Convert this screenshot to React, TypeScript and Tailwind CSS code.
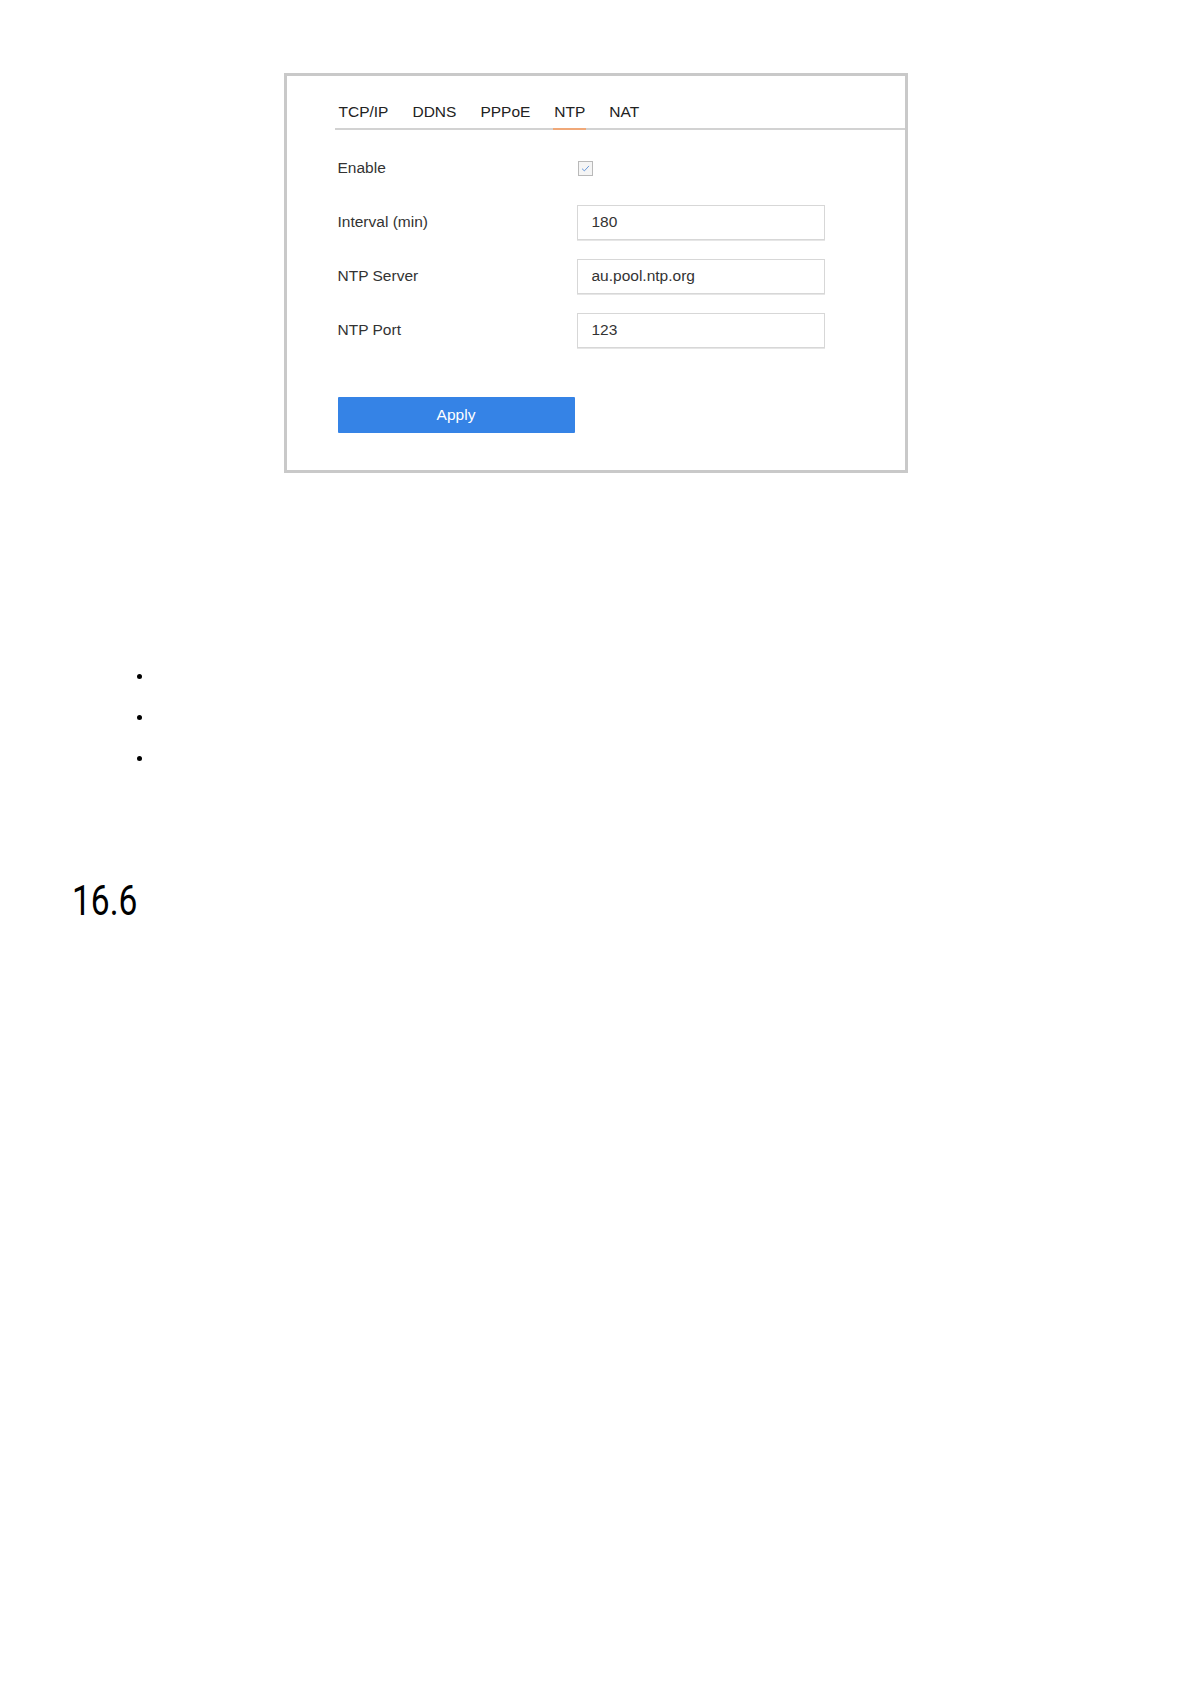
const tabs = ["TCP/IP", "DDNS", "PPPoE", "NTP", "NAT"];

const fields = [
  { label: "Interval (min)", value: "180" },
  { label: "NTP Server", value: "au.pool.ntp.org" },
  { label: "NTP Port", value: "123" },
];

function Checkbox() {
  return (
    <div className="flex h-[15px] w-[15px] items-center justify-center border border-[#b9b9b9] bg-[#f5f5f5]">
      <svg viewBox="0 0 12 12" className="h-[11px] w-[11px]">
        <path d="M2.2 6.2 L4.8 8.6 L9.8 3.2" fill="none" stroke="#5b8fd6" strokeWidth="1" />
      </svg>
    </div>
  );
}

export default function App() {
  return (
    <div className="min-h-[1684px] bg-white font-['Liberation_Sans',Arial,sans-serif] text-[#333]">
      <div className="flex justify-center pt-[73px]">
        <div className="w-[624px] border-[3px] border-[#c9c9c9] bg-white pb-[37px] pt-[26px]">
          {/* tabs */}
          <div className="ml-[48px] flex gap-[22px] border-b-2 border-[#d2d2d2] pl-[3px]">
            {tabs.map((t) => (
              <div
                key={t}
                className={`-mb-[2px] border-b-2 px-px pb-[6px] text-[15.5px] leading-[20px] text-[#222] ${
                  t === "NTP" ? "border-[#f0a878]" : "border-transparent"
                }`}
              >
                {t}
              </div>
            ))}
          </div>

          {/* form */}
          <div className="ml-[51px] mt-[21px] flex flex-col gap-[20px]">
            <div className="flex h-[34px] items-center">
              <div className="w-[239px] text-[15.5px]">Enable</div>
              <div className="pl-px">
                <Checkbox />
              </div>
            </div>
            {fields.map((f) => (
              <div key={f.label} className="flex h-[34px] items-center">
                <div className="w-[239px] text-[15.5px]">{f.label}</div>
                <div className="flex h-[35px] w-[248px] items-center border border-[#d7d7d7] pl-[14px] text-[15.5px] text-[#333] shadow-[0_1px_0_#e6e6e6]">
                  {f.value}
                </div>
              </div>
            ))}
            <div className="mt-[30px] flex h-[36px] w-[237px] items-center justify-center rounded-[1px] bg-[#3583e6] text-[15.5px] text-white">
              Apply
            </div>
          </div>
        </div>
      </div>

      {/* empty bullet list */}
      <div className="mt-[183px] flex flex-col">
        {[0, 1, 2].map((i) => (
          <div key={i} className="flex h-[41px] items-center pl-[137px]">
            <span className="h-[5px] w-[5px] rounded-full bg-black" />
          </div>
        ))}
      </div>

      <div className="ml-[72px] mt-[100px]">
        <span className="inline-block origin-left scale-x-[0.78] font-['Roboto',sans-serif] text-[43px] font-normal leading-none text-black">
          16.6
        </span>
      </div>
    </div>
  );
}
